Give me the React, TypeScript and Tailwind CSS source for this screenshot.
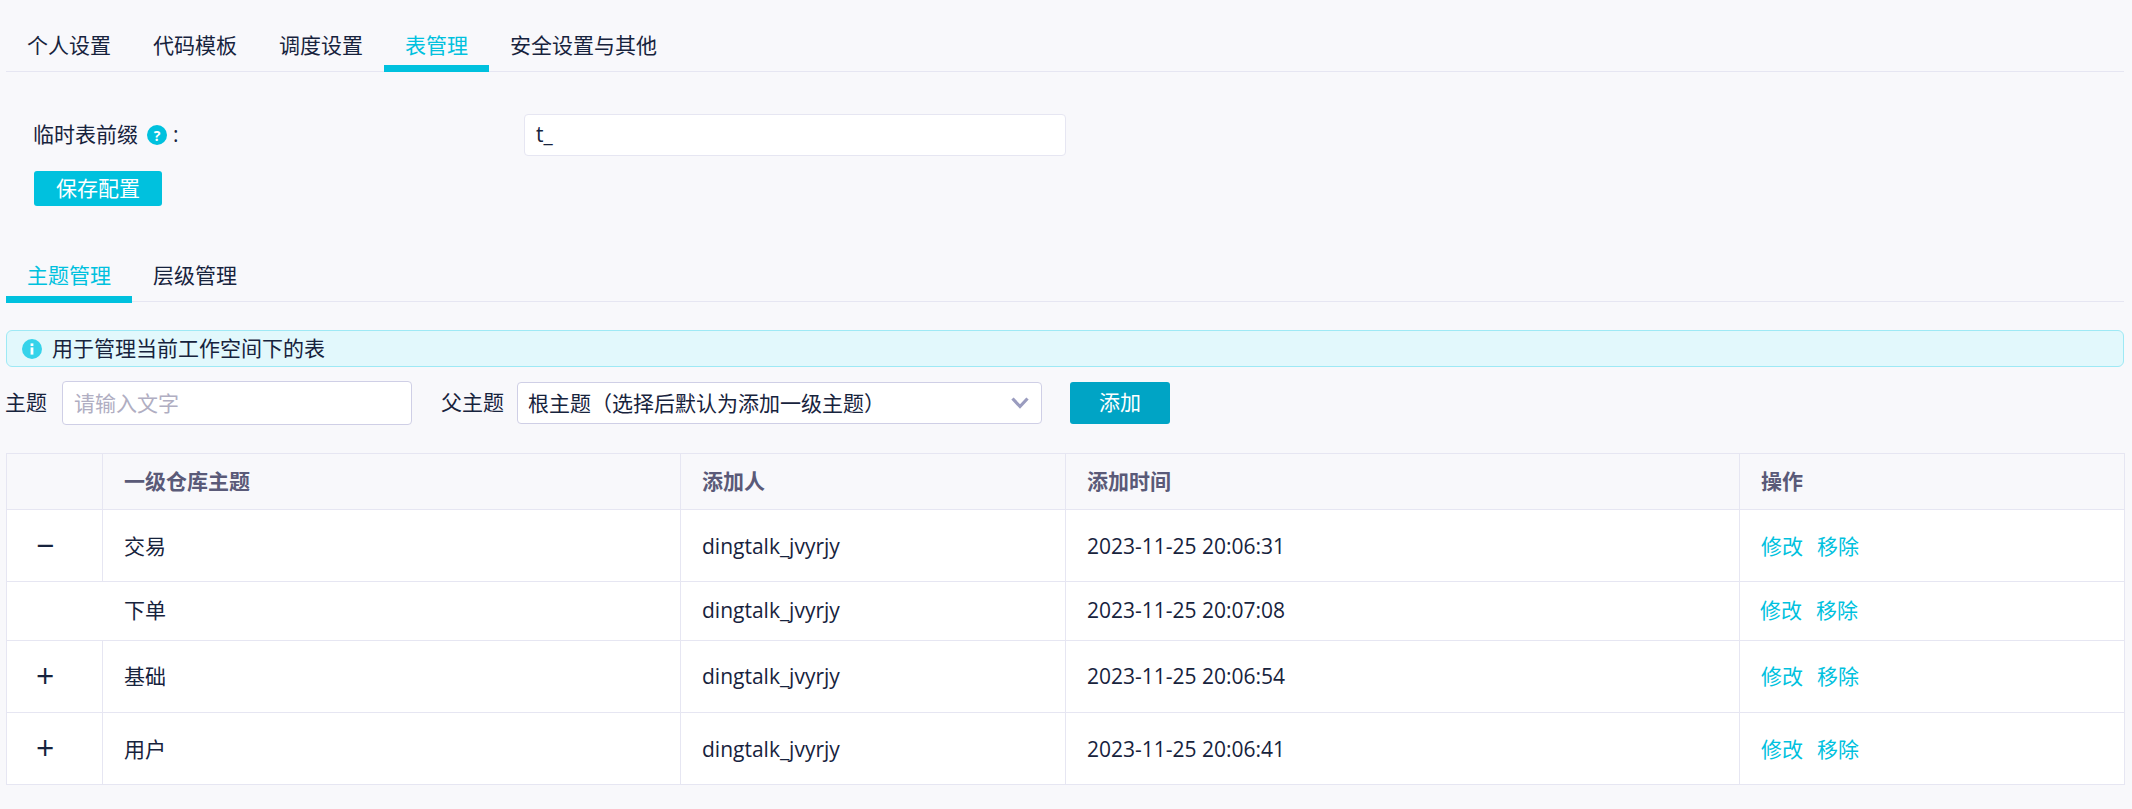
import React from "react";

const font = { fontFamily: '"Open Sans", "Noto Sans CJK SC", sans-serif' };

function Tabs({ items, active, low }: { items: string[]; active: number; low?: boolean }) {
  return (
    <div className="flex h-[41px] border-b border-[#e6e6f2]">
      {items.map((t, i) => (
        <div
          key={t}
          className={`px-[21px] leading-[28px] ${low ? "h-[42px]" : "h-[41px]"} ${
            i === active ? "border-b-[7px] border-[#00c1de] text-[#00c1de]" : "text-[#17233d]"
          }`}
        >
          {t}
        </div>
      ))}
    </div>
  );
}

const rows = [
  { sign: "−", name: "交易", time: "2023-11-25 20:06:31", h: "h-[72px]", pad: "pt-[2px]" },
  { sign: "", name: "下单", time: "2023-11-25 20:07:08", h: "h-[59px]", pad: "" },
  { sign: "+", name: "基础", time: "2023-11-25 20:06:54", h: "h-[72px]", pad: "" },
  { sign: "+", name: "用户", time: "2023-11-25 20:06:41", h: "h-[72px]", pad: "pt-[2px]" },
];

const cell = "border border-[#e6e6f2] px-[21px] text-left";

export default function App() {
  return (
    <div style={font} className="h-[809px] w-[2132px] overflow-hidden bg-[#f8f8fb] pl-[6px] pr-[8px] pt-[31px] text-[21px] text-[#17233d]">
      <Tabs items={["个人设置", "代码模板", "调度设置", "表管理", "安全设置与其他"]} active={3} />

      <div className="mt-[42px] flex h-[42px] items-center pl-[27px]">
        <div className="flex w-[491px] items-center">
          <span>临时表前缀</span>
          <span className="ml-[9px] flex h-[20px] w-[20px] items-center justify-center rounded-full bg-[#00c1de] text-[14px] font-bold text-white">?</span>
          <span className="ml-[6px]">:</span>
        </div>
        <div className="flex h-[42px] w-[542px] items-center rounded-[4px] border border-[#e6e6f2] bg-white pl-[11px]">t_</div>
      </div>

      <button className="ml-[28px] mt-[15px] block h-[35px] w-[128px] rounded-[3px] bg-[#00c1de] text-center text-[21px] leading-[33px] text-white">保存配置</button>

      <div className="mt-[55px]">
        <Tabs items={["主题管理", "层级管理"]} active={0} low />
      </div>

      <div className="mt-[28px] flex h-[37px] items-center rounded-[6px] border border-[#9ee9f5] bg-[#e2f8fc] pl-[15px]">
        <svg viewBox="0 0 20 20" className="h-[20px] w-[20px]">
          <circle cx="10" cy="10" r="10" fill="#36d3ea" />
          <rect x="8.6" y="8.4" width="2.8" height="7.2" fill="#fff" />
          <rect x="8.6" y="4.4" width="2.8" height="2.6" fill="#fff" />
        </svg>
        <span className="ml-[10px]">用于管理当前工作空间下的表</span>
      </div>

      <div className="mt-[14px] flex h-[44px] items-center">
        <span className="-ml-px w-[57px]">主题</span>
        <div className="flex h-[44px] w-[350px] items-center rounded-[4px] border border-[#cfcfe6] bg-white pl-[11px] pt-[2px] text-[#b0aec2]">请输入文字</div>
        <span className="ml-[29px] w-[76px]">父主题</span>
        <div className="flex h-[42px] w-[525px] items-center justify-between rounded-[4px] border border-[#cfcfe6] bg-white pl-[10px] pr-[12px] pt-[2px]">
          <span>根主题（选择后默认为添加一级主题）</span>
          <svg viewBox="0 0 18 12" className="-mt-[2px] h-[12px] w-[18px]" fill="none" stroke="#9a9cbf" strokeWidth="3.2">
            <path d="M1.5 1.5 L9 9.5 L16.5 1.5" />
          </svg>
        </div>
        <button className="ml-[28px] h-[42px] w-[100px] rounded-[3px] bg-[#00a4c5] text-[21px] text-white">添加</button>
      </div>

      <table className="mt-[28px] w-[2118px] table-fixed border-collapse">
        <colgroup>
          <col className="w-[96px]" />
          <col className="w-[578px]" />
          <col className="w-[385px]" />
          <col className="w-[674px]" />
          <col className="w-[385px]" />
        </colgroup>
        <thead>
          <tr className="h-[56px] font-bold text-[#5a5a78]">
            <th className={cell}></th>
            <th className={cell}>一级仓库主题</th>
            <th className={cell}>添加人</th>
            <th className={cell}>添加时间</th>
            <th className={cell}>操作</th>
          </tr>
        </thead>
        <tbody className="bg-white">
          {rows.map((r) => (
            <tr key={r.name} className={r.h}>
              {r.sign ? (
                <>
                  <td className="border border-[#e6e6f2] pb-[2px] pl-[29px] text-left text-[32px] font-medium leading-none">{r.sign}</td>
                  <td className={`${cell} ${r.pad}`}>{r.name}</td>
                </>
              ) : (
                <td colSpan={2} className={`border border-[#e6e6f2] pl-[117px] ${r.pad}`}>{r.name}</td>
              )}
              <td className={`${cell} ${r.pad}`}>dingtalk_jvyrjy</td>
              <td className={`${cell} ${r.pad}`}>{r.time}</td>
              <td className={`${cell} ${r.pad} text-[#00c1de] ${r.sign ? "" : "-translate-x-px"}`}>
                <span>修改</span>
                <span className="ml-[14px]">移除</span>
              </td>
            </tr>
          ))}
        </tbody>
      </table>
    </div>
  );
}
